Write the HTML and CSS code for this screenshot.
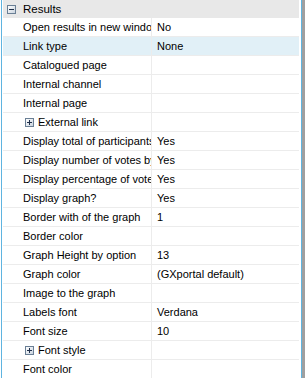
FILE: index.html
```html
<!DOCTYPE html>
<html lang="en">
<head>
    <meta charset="UTF-8">
    <title>Results properties</title>
    <link rel="stylesheet" href="styles.css">
</head>
<body>
    <div class="grid-frame">
        <div class="prop-grid">
            <!-- Заголовок категории -->
            <div class="category">
                <span class="toggle minus"></span>
                <span class="category-title">Results</span>
            </div>

            <div class="row"><div class="name">Open results in new window</div><div class="value">No</div></div>
            <div class="row selected"><div class="name">Link type</div><div class="value">None</div></div>
            <div class="row"><div class="name">Catalogued page</div><div class="value"></div></div>
            <div class="row"><div class="name">Internal channel</div><div class="value"></div></div>
            <div class="row"><div class="name">Internal page</div><div class="value"></div></div>
            <div class="row"><div class="name has-toggle"><span class="toggle plus"></span>External link</div><div class="value"></div></div>
            <div class="row"><div class="name">Display total of participants</div><div class="value">Yes</div></div>
            <div class="row"><div class="name">Display number of votes by option</div><div class="value">Yes</div></div>
            <div class="row"><div class="name">Display percentage of votes</div><div class="value">Yes</div></div>
            <div class="row"><div class="name">Display graph?</div><div class="value">Yes</div></div>
            <div class="row"><div class="name">Border with of the graph</div><div class="value">1</div></div>
            <div class="row"><div class="name">Border color</div><div class="value"></div></div>
            <div class="row"><div class="name">Graph Height by option</div><div class="value">13</div></div>
            <div class="row"><div class="name">Graph color</div><div class="value">(GXportal default)</div></div>
            <div class="row"><div class="name">Image to the graph</div><div class="value"></div></div>
            <div class="row"><div class="name">Labels font</div><div class="value">Verdana</div></div>
            <div class="row"><div class="name">Font size</div><div class="value">10</div></div>
            <div class="row"><div class="name has-toggle"><span class="toggle plus"></span>Font style</div><div class="value"></div></div>
            <div class="row"><div class="name">Font color</div><div class="value"></div></div>
        </div>
    </div>
</body>
</html>
```

FILE: styles.css
```css
* {
    margin: 0;
    padding: 0;
    box-sizing: border-box;
}
body, html {
    height: 100%;
    overflow: hidden;
    background: #fff;
}
body {
    font-family: "Liberation Sans", Arial, sans-serif;
    font-size: 11px;
    color: #000;
}
.grid-frame {
    height: 100%;
    width: 305px;
    padding-left: 1px;
    border-right: 3px solid #a0a0a0;
}
.prop-grid {
    height: 100%;
    border-left: 1px solid #5fb4e0;
    border-right: 1px solid #5fb4e0;
    padding: 0 2px 0 1px;
}
.category {
    display: flex;
    align-items: center;
    height: 18px;
    background-color: #e8e8e8;
    padding-left: 4px;
    font-size: 11.5px;
}
.category .toggle {
    margin-right: 7px;
}
.row {
    display: grid;
    grid-template-columns: 149px 1fr;
    height: 19px;
    border-bottom: 1px solid #ececec;
}
.row.selected {
    background-color: #e1f0f7;
}
.name {
    display: flex;
    align-items: center;
    padding-left: 20px;
    white-space: nowrap;
    overflow: hidden;
    border-right: 1px solid #ececec;
}
.name.has-toggle {
    padding-left: 22px;
}
.name .toggle {
    margin-right: 4px;
}
.value {
    display: flex;
    align-items: center;
    padding-left: 5px;
    white-space: nowrap;
    overflow: hidden;
}
.toggle {
    position: relative;
    display: inline-block;
    flex-shrink: 0;
    width: 9px;
    height: 9px;
    border: 1px solid #6a7f95;
    background: linear-gradient(135deg, #fff, #c9d3de);
}
.toggle::before {
    content: "";
    position: absolute;
    left: 1px;
    top: 3px;
    width: 5px;
    height: 1px;
    background: #1f2f4a;
}
.toggle.plus::after {
    content: "";
    position: absolute;
    left: 3px;
    top: 1px;
    width: 1px;
    height: 5px;
    background: #1f2f4a;
}
```
